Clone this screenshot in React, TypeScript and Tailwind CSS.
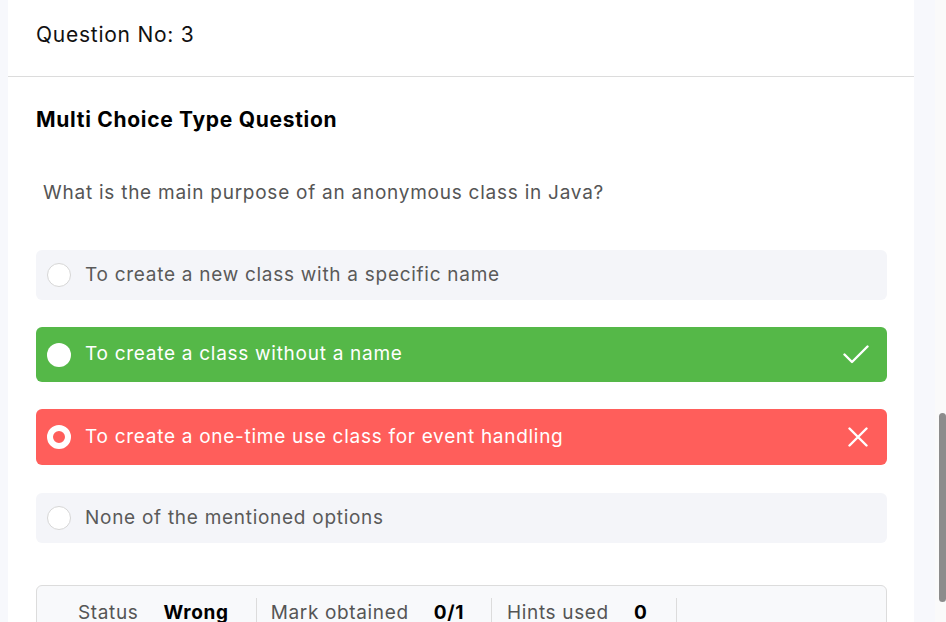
import React from "react";

const font = { fontFamily: "Inter, 'Open Sans', sans-serif" };

function Radio({ kind }: { kind: "empty" | "filled" | "ring" }) {
  if (kind === "filled")
    return <span className="block w-6 h-6 rounded-full bg-white shrink-0" />;
  if (kind === "ring")
    return <span className="block w-6 h-6 rounded-full border-[6px] border-white shrink-0" />;
  return <span className="block w-6 h-6 rounded-full bg-white border border-[#d6d6d6] shrink-0" />;
}

export default function App() {
  return (
    <div className="flex h-[622px] overflow-hidden bg-[#f7f8fc]" style={font}>
      <div className="w-2 shrink-0" />
      <div className="w-[906px] shrink-0 bg-white">
        <div className="h-[77px] border-b border-[#dcdcdc] px-7 pt-[22px]">
          <div className="text-[21px] leading-[26px] tracking-[0.75px] text-[#111]">Question No: 3</div>
        </div>
        <div className="px-7 pt-[30px]">
          <div className="text-[21px] leading-[26px] tracking-[0.7px] font-bold text-black">Multi Choice Type Question</div>
          <div className="mt-[47px] pl-[7px] text-[19px] leading-[26px] tracking-[0.75px] text-[#555]">
            What is the main purpose of an anonymous class in Java?
          </div>
          <div className="mt-[44px] w-[851px] text-[19px] tracking-[0.72px]">
            <div className="h-[50px] rounded-md bg-[#f4f5f9] flex items-center pl-[11px] gap-[14px]">
              <Radio kind="empty" />
              <span className="text-[#5a5a5a]">To create a new class with a specific name</span>
            </div>
            <div className="mt-[27px] h-[55px] rounded-md bg-[#55b848] flex items-center pl-[11px] pr-[18px] gap-[14px]">
              <Radio kind="filled" />
              <span className="text-white flex-1">To create a class without a name</span>
              <svg width="26" height="19" viewBox="0 0 26 19" fill="none" stroke="white" strokeWidth="2.4" strokeLinecap="round" strokeLinejoin="round">
                <path d="M1.5 9.5 L9 17 L24.5 1.5" />
              </svg>
            </div>
            <div className="mt-[27px] h-[56px] rounded-md bg-[#ff5e5b] flex items-center pl-[11px] pr-[19px] gap-[14px]">
              <Radio kind="ring" />
              <span className="text-white flex-1">To create a one-time use class for event handling</span>
              <svg width="20" height="20" viewBox="0 0 20 20" fill="none" stroke="white" strokeWidth="2.4" strokeLinecap="round">
                <path d="M1.5 1.5 L18.5 18.5 M18.5 1.5 L1.5 18.5" />
              </svg>
            </div>
            <div className="mt-[28px] h-[50px] rounded-md bg-[#f4f5f9] flex items-center pl-[11px] gap-[14px]">
              <Radio kind="empty" />
              <span className="text-[#5a5a5a]">None of the mentioned options</span>
            </div>
            <div className="mt-[42px] h-[80px] rounded-md border border-[#dcdcdc] bg-[#f8f9fb] flex items-start pl-[41px] pt-[12px] tracking-[0.65px]">
              <div className="flex items-center h-[30px]">
                <span className="text-[#555]">Status</span>
                <span className="ml-[25px] font-bold text-black">Wrong</span>
              </div>
              <div className="ml-[27px] w-px h-[40px] bg-[#dcdcdc]" />
              <div className="flex items-center h-[30px] pl-[14px]">
                <span className="text-[#555]">Mark obtained</span>
                <span className="ml-[25px] font-bold text-black">0/1</span>
              </div>
              <div className="ml-[27px] w-px h-[40px] bg-[#dcdcdc]" />
              <div className="flex items-center h-[30px] pl-[15px]">
                <span className="text-[#555]">Hints used</span>
                <span className="ml-[25px] font-bold text-black">0</span>
              </div>
              <div className="ml-[29px] w-px h-[40px] bg-[#dcdcdc]" />
            </div>
          </div>
        </div>
      </div>
      <div className="w-[21px] shrink-0" />
      <div className="w-[11px] shrink-0 bg-[#fafafa] pt-[413px] pl-[4px]">
        <div className="w-[7px] h-[189px] rounded-full bg-[#8c8c8c]" />
      </div>
    </div>
  );
}
